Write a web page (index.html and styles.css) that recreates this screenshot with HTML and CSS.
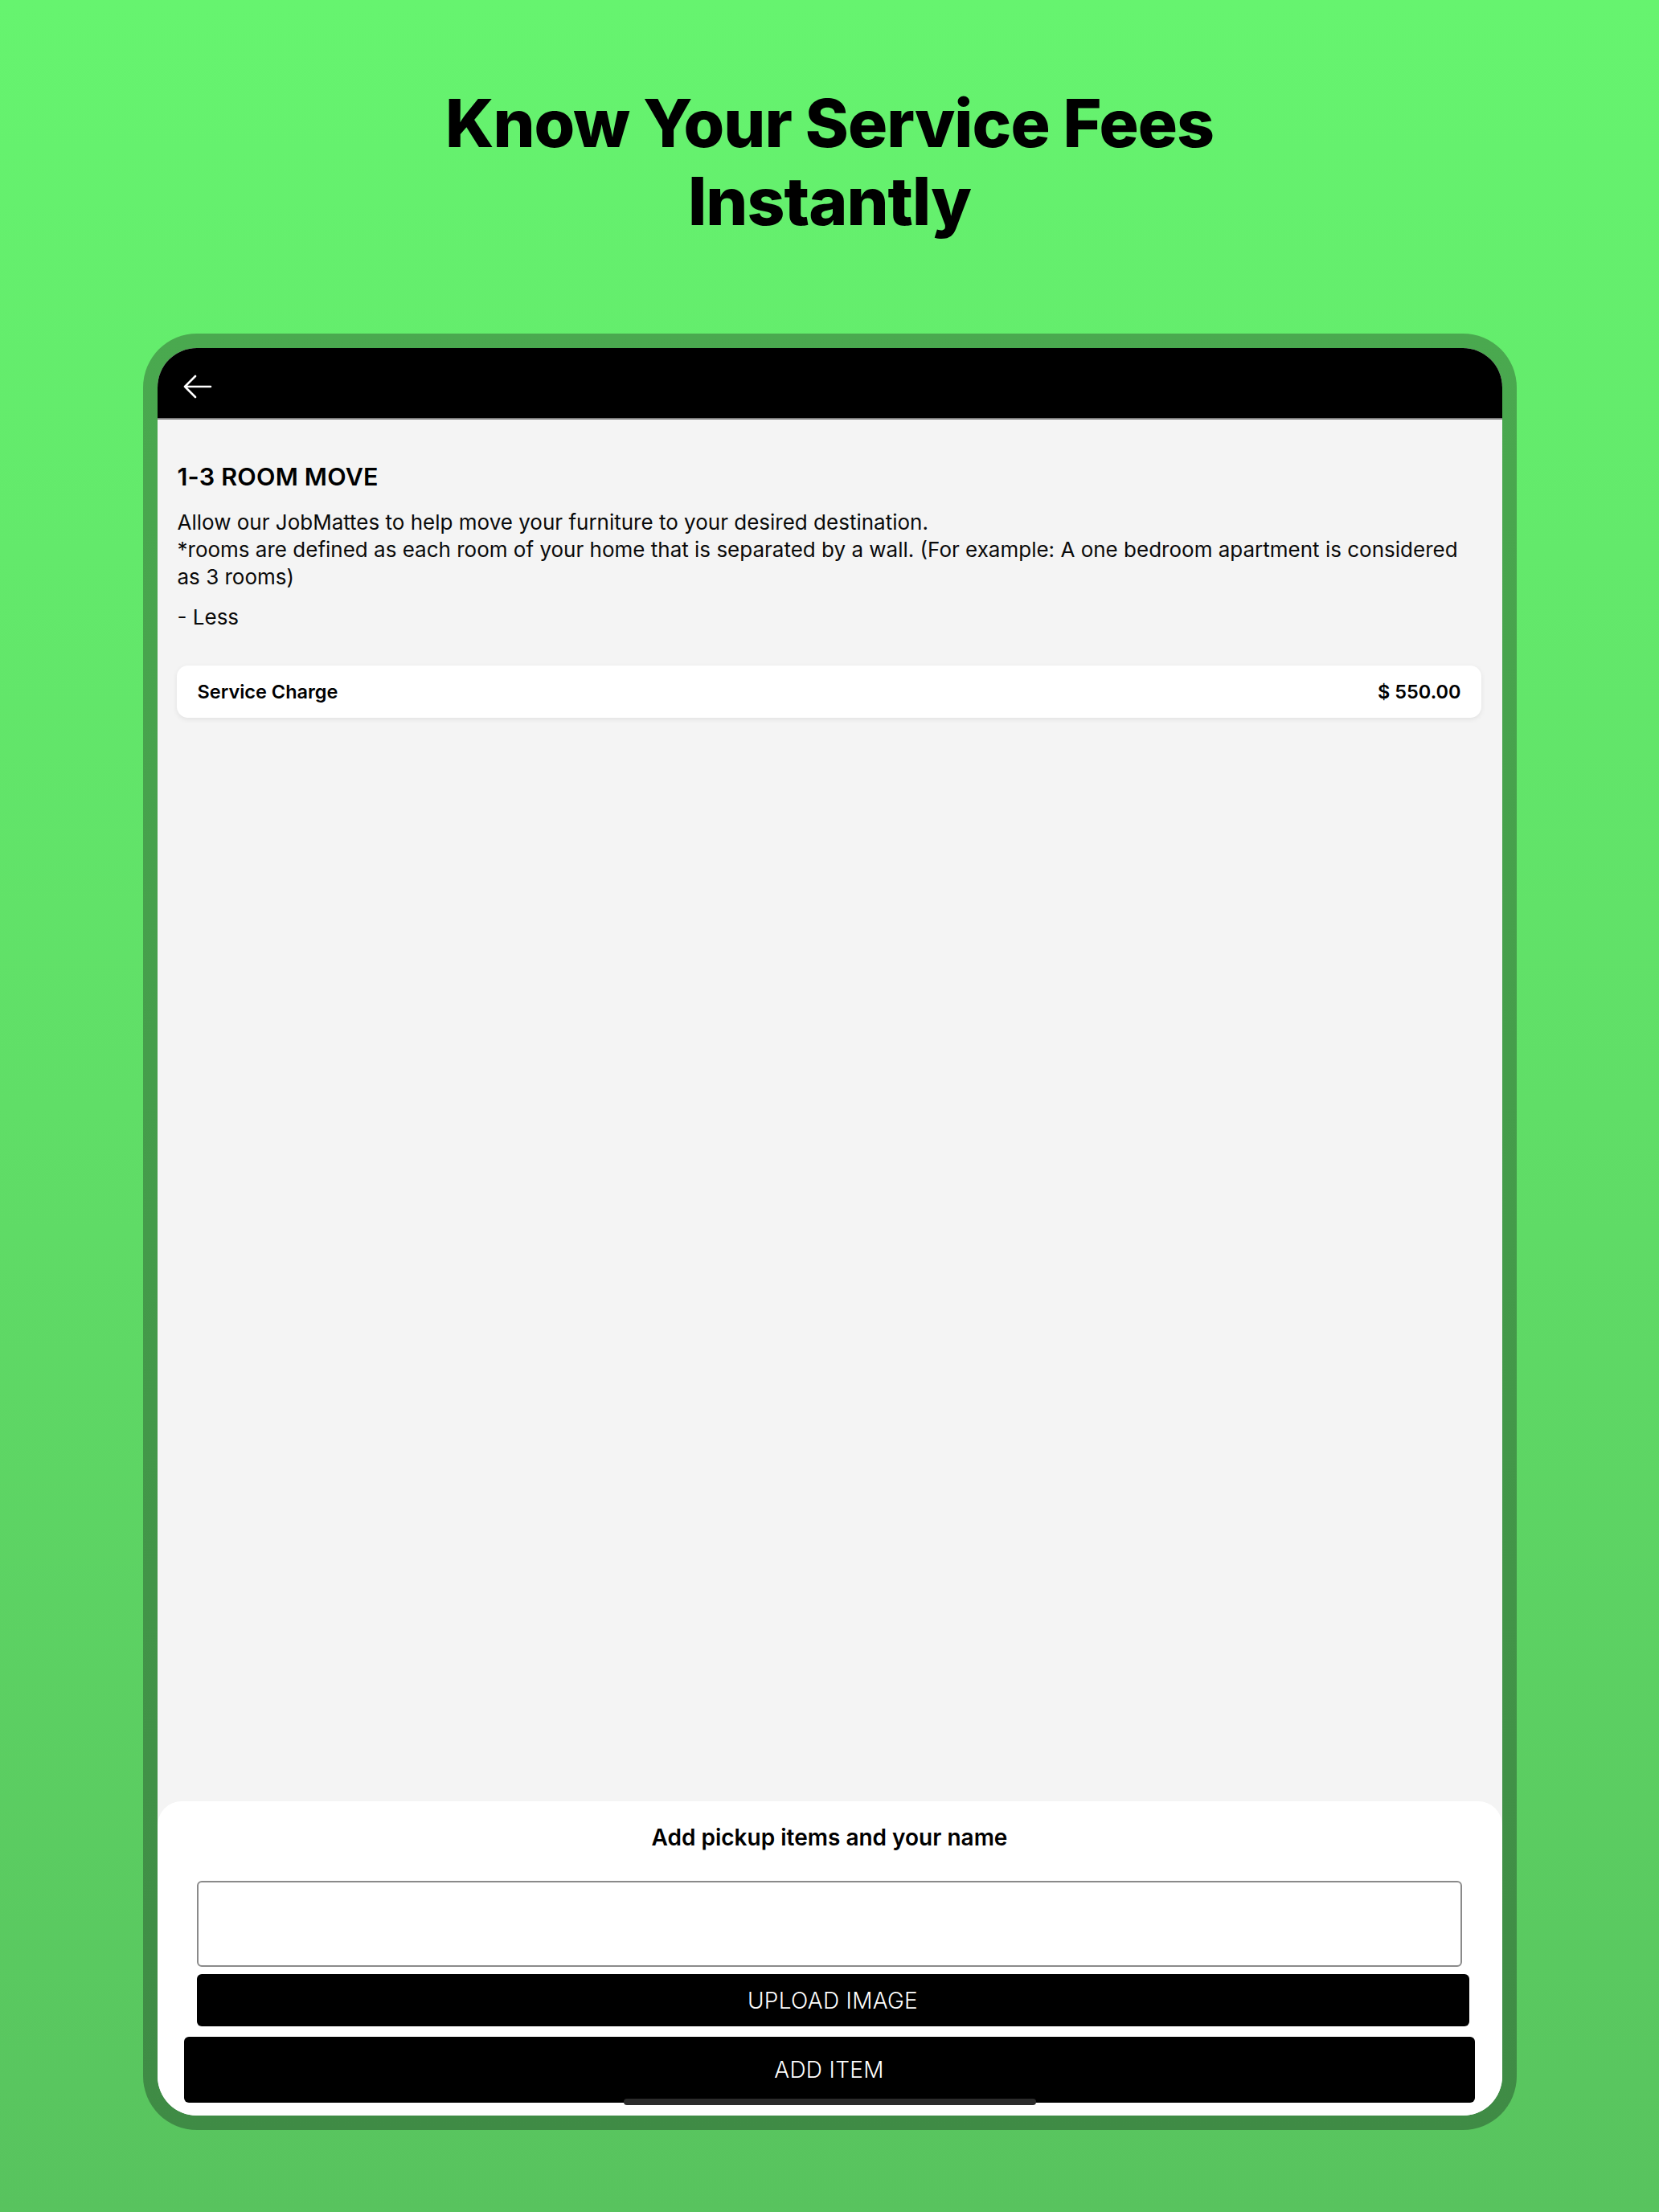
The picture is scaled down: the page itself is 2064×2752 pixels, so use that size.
FILE: index.html
```html
<!DOCTYPE html>
<html lang="en">
<head>
<meta charset="utf-8">
<title>Know Your Service Fees Instantly</title>
<link rel="stylesheet" href="styles.css">
</head>
<body>
<div class="page">
  <h1 class="headline">Know Your Service Fees<br>Instantly</h1>
  <div class="device">
    <div class="screen">
      <div class="appbar">
        <svg class="back" width="36" height="30" viewBox="0 0 36 30" aria-hidden="true">
          <path d="M34 15H2M15 2L2 15l13 13" fill="none" stroke="#fff" stroke-width="2.6" stroke-linecap="round" stroke-linejoin="round"/>
        </svg>
      </div>
      <div class="content">
        <h2 class="service-title">1-3 ROOM MOVE</h2>
        <p class="desc">Allow our JobMattes to help move your furniture to your desired destination.<br>*rooms are defined as each room of your home that is separated by a wall. (For example: A one bedroom apartment is considered<br>as 3 rooms)</p>
        <p class="less">- Less</p>
        <div class="charge-card">
          <span class="charge-label">Service Charge</span>
          <span class="charge-value">$ 550.00</span>
        </div>
      </div>
      <div class="sheet">
        <div class="sheet-title">Add pickup items and your name</div>
        <div class="input-box"></div>
        <div class="btn btn-upload">UPLOAD IMAGE</div>
        <div class="btn btn-add">ADD ITEM</div>
        <div class="home-indicator"></div>
      </div>
    </div>
  </div>
</div>
</body>
</html>
```
FILE: styles.css
```css
html, body {
  margin: 0;
  padding: 0;
}
body {
  width: 2064px;
  height: 2752px;
  background: linear-gradient(180deg, #66f46f 0%, #60de67 50%, #58c35e 100%);
  font-family: "Inter", "Liberation Sans", sans-serif;
  color: #000;
  overflow: hidden;
}
.page {
  display: flex;
  flex-direction: column;
  align-items: center;
  padding-top: 105px;
}
.headline {
  margin: 0;
  font-family: "Inter", sans-serif;
  font-weight: 800;
  font-size: 82px;
  line-height: 97px;
  text-align: center;
  letter-spacing: -1px;
  color: #000;
}
.device {
  margin-top: 116px;
  width: 1709px;
  height: 2235px;
  box-sizing: border-box;
  padding: 18px;
  border-radius: 67px;
  background: linear-gradient(180deg, #4aa94f 0%, #449b4a 50%, #3f8b45 100%);
}
.screen {
  position: relative;
  width: 100%;
  height: 100%;
  border-radius: 49px;
  overflow: hidden;
  background: #f4f4f4;
  display: flex;
  flex-direction: column;
}
.appbar {
  flex: none;
  background: #000;
  border-bottom: 2px solid #7d7d7d;
  display: flex;
  align-items: center;
  padding-left: 32px;
  padding-top: 8px;
  box-sizing: content-box;
  height: 79px;
}
.back {
  display: block;
}
.content {
  flex: 1;
  padding: 51px 26px 0 25px;
}
.service-title {
  margin: 0;
  font-size: 30.5px;
  line-height: 40px;
  font-weight: 600;
  letter-spacing: 0.2px;
}
.desc {
  margin: 20px 0 0;
  font-size: 26px;
  line-height: 34px;
  font-weight: 400;
  color: #0a0a0a;
}
.less {
  margin: 16px 0 0;
  font-size: 26px;
  line-height: 34px;
  color: #0a0a0a;
}
.charge-card {
  margin-top: 43px;
  height: 65px;
  margin-left: -1px;
  background: #fff;
  border-radius: 14px;
  box-shadow: 0 2px 6px rgba(0, 0, 0, 0.08);
  display: flex;
  align-items: center;
  justify-content: space-between;
  padding: 0 25px 0 26px;
  font-size: 23.5px;
  font-weight: 600;
}
.sheet {
  position: relative;
  flex: none;
  height: 391px;
  box-sizing: border-box;
  background: #fff;
  border-radius: 30px 30px 0 0;
  padding-top: 27px;
  display: flex;
  flex-direction: column;
}
.sheet-title {
  text-align: center;
  font-size: 28px;
  line-height: 36px;
  font-weight: 600;
}
.input-box {
  margin: 36px 50px 0 49px;
  height: 107px;
  box-sizing: border-box;
  border: 2px solid #8a8a8a;
  border-radius: 6px;
  background: #fff;
}
.btn {
  background: #000;
  color: #fff;
  font-weight: 300;
  font-size: 28px;
  border-radius: 6px;
  display: flex;
  align-items: center;
  justify-content: center;
  letter-spacing: 0.3px;
}
.btn-upload {
  margin: 9px 41px 0 49px;
  height: 65px;
}
.btn-add {
  margin: 13px 34px 0 33px;
  height: 82px;
}
.home-indicator {
  position: absolute;
  left: 580px;
  bottom: 13px;
  width: 513px;
  height: 8px;
  border-radius: 4px;
  background: #2b2b2b;
}
```
